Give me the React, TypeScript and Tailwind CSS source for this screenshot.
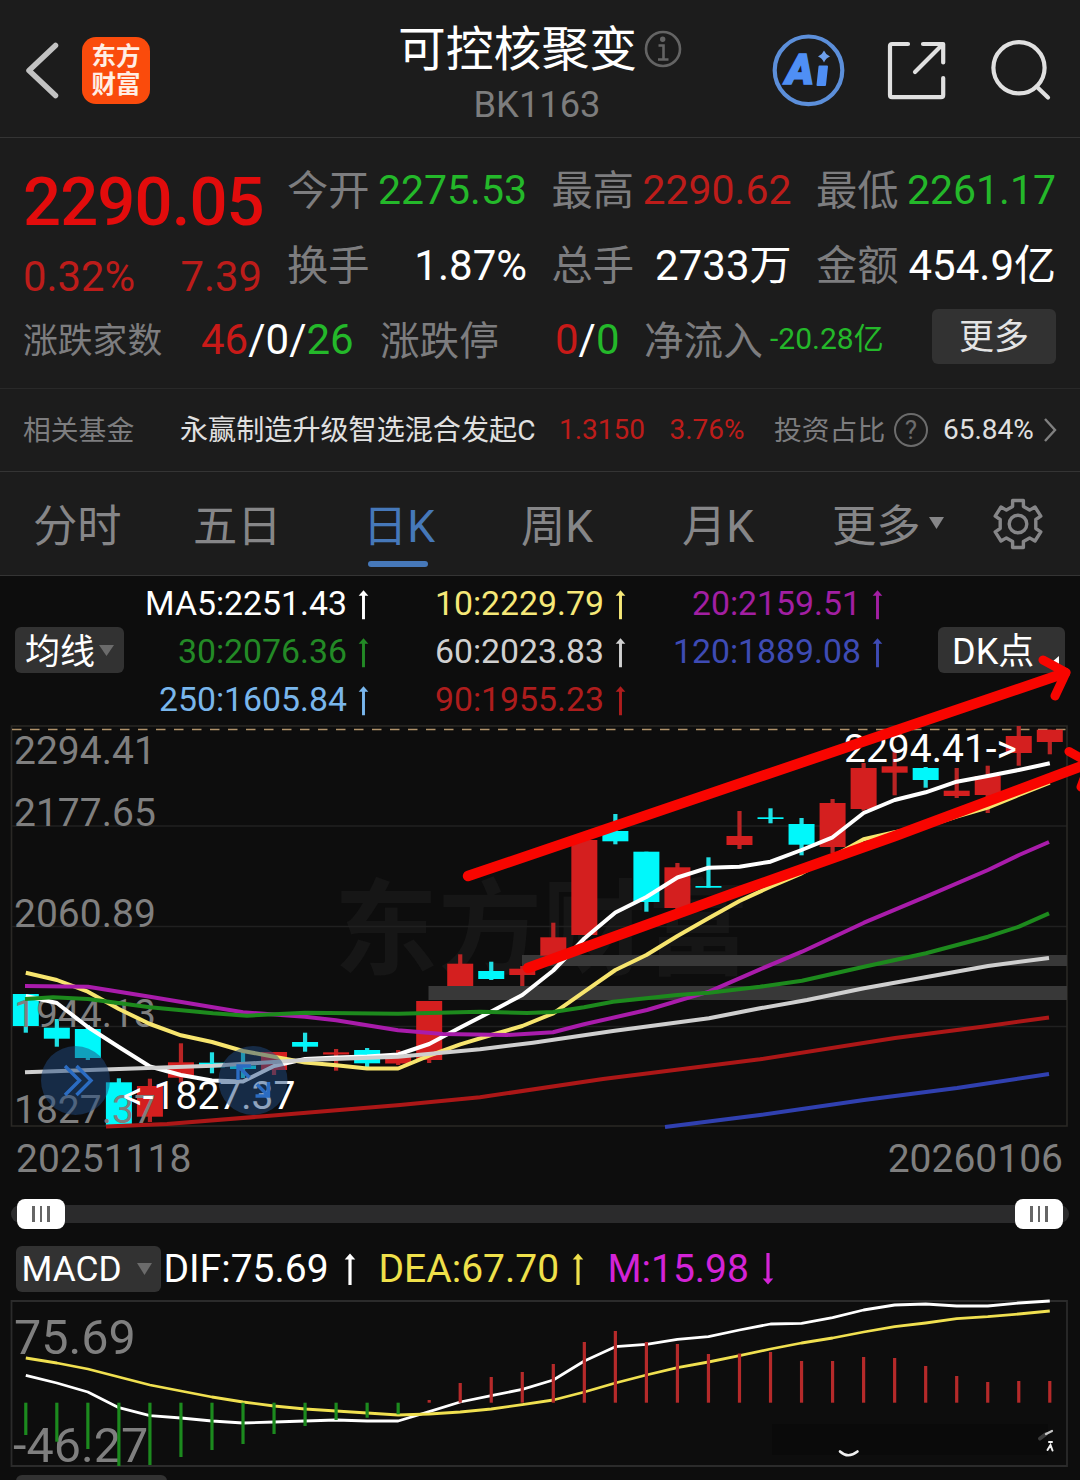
import React from 'react';
import clsx from 'clsx';

const FIRST_X = 25.8;
const STEP = 31.03;

const xAt = (index: number) => FIRST_X + index * STEP;

type Candle = [up: boolean, top: number, bottom: number, high: number, low: number];

const candles: Candle[] = [
  [false, 994, 1026, 994, 1032.7],
  [false, 1027.7, 1038.7, 1019, 1046.7],
  [false, 1029, 1058, 1025, 1060],
  [false, 1082.3, 1125.7, 1078.3, 1125.7],
  [true, 1086, 1116.7, 1078.7, 1122],
  [true, 1062.3, 1077.7, 1043.3, 1082.7],
  [false, 1062.7, 1067.3, 1052.3, 1073.3],
  [false, 1065.5, 1069, 1052, 1078],
  [true, 1052, 1070, 1052, 1075],
  [false, 1042, 1046.7, 1032.7, 1051.7],
  [true, 1052.3, 1054.5, 1049, 1070.7],
  [false, 1050, 1063.3, 1048, 1067.3],
  [true, 1055, 1063.5, 1050, 1065],
  [true, 1001, 1060, 1001, 1063],
  [true, 963.7, 986, 954.3, 986],
  [false, 971, 979, 961.7, 980],
  [true, 968.7, 975, 966, 986],
  [true, 937.3, 955.7, 922.7, 958],
  [true, 840, 935, 840, 935],
  [false, 831, 841.3, 814, 844.3],
  [false, 851.7, 902, 851.7, 911.7],
  [true, 867.3, 908, 863, 910.7],
  [false, 886, 887.7, 857.3, 887.7],
  [true, 836, 845, 811, 849],
  [false, 817.3, 819, 808.3, 823.3],
  [false, 824, 844.7, 818, 855.3],
  [true, 803, 847, 799, 853],
  [true, 768, 809, 763, 810.7],
  [true, 766.3, 772.7, 750, 795.3],
  [false, 768, 780, 767, 787.7],
  [true, 790.7, 796, 768, 798],
  [true, 776, 795, 765.7, 813],
  [true, 736, 753, 726, 765.7],
  [true, 729.7, 742, 729.7, 754.3],
];

const ma5 = [
  996, 1003, 1027, 1047, 1066.5, 1075, 1080.5, 1081.5, 1066, 1059, 1057.5, 1056.5, 1054.5, 1044, 1027.5, 1011.5, 995,
  970.5, 938.5, 912.5, 897, 877.5, 867.7, 866.7, 861.7, 850, 837.3, 813, 800, 792.3, 781.7, 776, 770, 763.3,
];

const ma10 = [
  972.7, 980, 991.7, 1009, 1024, 1035.3, 1042, 1051, 1056.7, 1062.5, 1065.3, 1068.5, 1068.5, 1055.6, 1044.3, 1035, 1026,
  1013.3, 991.7, 970, 955, 936, 918.3, 901, 886.7, 873.3, 856.7, 839.3, 832.3, 826.7, 816.7, 807.7, 795, 782.7,
];

const ma20 =
  '25,986 88,986.7 150,996.7 213,1007.3 243,1012.3 305,1016.7 336,1020.3 398,1030.3 443,1034 507,1035 553,1032.3 584,1024.3 647,1010 709,991.7 760,969.3 802,951.7 864,922.7 926,896.7 988,870 1019,855 1049,842';
const ma30 =
  '25,999 53,997.3 88,999 150,1007.3 213,1013.3 247,1015.7 305,1012.7 398,1013.7 480,1011.7 527,1013 553,1012 584,1007.3 613,1001.7 677,995 709,992.7 760,986.7 802,980.7 864,966.7 926,953.3 988,936.7 1019,926.7 1049,913.3';
const ma60 =
  '25,1072.3 213,1065.7 305,1060 398,1056.7 480,1049.3 533,1042.7 613,1031 709,1018.3 760,1008.3 807,1000 864,988.3 988,966 1049,958';
const ma90 = '106,1126.5 167,1124 267,1116 400,1105 480,1097.3 603,1079 760,1059.3 895,1038 988,1026 1049,1017.5';
const ma120 = '665,1127 760,1115 864,1100 957,1088 1049,1074';

const dif = [
  1375.3, 1383, 1392, 1407.7, 1415.7, 1418, 1421, 1423, 1422, 1421, 1420, 1421, 1421, 1411.7, 1402, 1395.7, 1389.3, 1380,
  1361, 1346.7, 1344.3, 1339.3, 1336.7, 1330, 1324, 1323.3, 1317.7, 1310, 1305, 1304, 1306, 1306, 1303, 1301,
];

const dea = [
  1358, 1363, 1369, 1377, 1385, 1391, 1397, 1402, 1406, 1409, 1411, 1413, 1415, 1414, 1412, 1409, 1404.7, 1400, 1392,
  1383, 1375, 1367.7, 1362, 1355.7, 1349, 1343, 1338, 1332, 1326.7, 1323, 1318.7, 1316.7, 1314, 1311,
];

// end of every histogram bar, the other end is on the zero line
const histogram = [
  1435, 1441.7, 1449, 1466, 1465, 1457, 1450, 1444, 1434, 1426, 1420, 1417.7, 1414.3, 1400, 1383, 1377, 1372, 1364, 1342,
  1331, 1342, 1344, 1354, 1353.5, 1352, 1361, 1361, 1357, 1358, 1366, 1376, 1382, 1381, 1381,
];
const ZERO_Y = 1402.7;

const toPoints = (values: number[]) => values.map((y, i) => `${xAt(i)},${y}`).join(' ');

interface TrendArrowProps {
  down?: boolean;
  className?: string;
}

function TrendArrow({ down, className }: TrendArrowProps) {
  return (
    <svg viewBox="0 0 12 32" className={clsx('shrink-0', down && 'rotate-180', className)}>
      <path d="M6 0.5 L11.3 6.5 H7.6 V32 H4.4 V6.5 H0.7 Z" fill="currentColor" />
    </svg>
  );
}

function Header() {
  return (
    <header className="flex h-[138px] items-start border-b border-[#343434] pl-[21px]">
      <svg viewBox="0 0 40 60" className="mt-[41px] h-[60px] w-10 fill-none stroke-[#c2c2c2]" strokeWidth="5.5">
        <path d="M34.5 4.5 L8 29.5 L34.5 54.5" strokeLinecap="round" strokeLinejoin="round" />
      </svg>
      <div className="mt-[37px] ml-[21px] flex h-[67px] w-[68px] flex-col items-center justify-center rounded-[14px] bg-[#fa4b0c] pt-px text-[24.5px] leading-[28px] font-bold text-[#ffeee4]">
        <span>东方</span>
        <span>财富</span>
      </div>
      <div className="ml-[248px] w-[286px]">
        <div className="mt-[19px] flex h-[60px] items-center gap-[7px]">
          <h1 className="pt-[2px] text-[47.8px] leading-[60px] text-white">可控核聚变</h1>
          <svg viewBox="0 0 38 38" className="size-[38px] fill-none stroke-[#646464]" strokeWidth="2.6">
            <circle cx="19" cy="19" r="17" />
            <path d="M14.5 15.5 H19.5 V29 M14 29.5 H24.5" />
            <circle cx="18.7" cy="9.2" r="1.4" fill="#646464" />
          </svg>
        </div>
        <div className="w-[278px] pt-px text-center text-[36.3px] leading-[50px] text-[#7d7d7d]">BK1163</div>
      </div>
      <div className="mt-[34px] ml-[88px] flex size-[73px] items-center justify-center">
        <svg viewBox="0 0 73 73" className="size-[73px]">
          <circle cx="36.5" cy="36.3" r="33.8" fill="none" stroke="#5c8fda" strokeWidth="4.2" />
          <text x="13.5" y="50" fontSize="43" fontWeight="900" fontStyle="italic" fill="#4f8ff5" stroke="#4f8ff5" strokeWidth="1.5">
            A
          </text>
          <path d="M47.5 32.5 H55 L53 51 H45.5 Z" fill="#4f8ff5" stroke="#4f8ff5" strokeWidth="2" strokeLinejoin="round" />
          <path d="M52 16.5 Q53.8 20.8 58 22.6 Q53.8 24.2 52 28.5 Q50.2 24.2 46 22.6 Q50.2 20.8 52 16.5 Z" fill="#6d9fec" />
        </svg>
      </div>
      <svg
        viewBox="0 0 62 62"
        className="mt-[39px] ml-[41px] size-[62px] fill-none stroke-[#e0e0e0]"
        strokeWidth="4.2"
        strokeLinecap="round"
        strokeLinejoin="round"
      >
        <path d="M22 5 H6 Q4 5 4 7 V56 Q4 58.2 6 58.2 H55 Q57.2 58.2 57.2 56 V39" />
        <path d="M37 5 H57.2 V23.5 M56 6 L29 33" />
      </svg>
      <svg
        viewBox="0 0 66 66"
        className="mt-[37px] ml-[40px] size-[66px] fill-none stroke-[#e0e0e0]"
        strokeWidth="4.2"
        strokeLinecap="round"
      >
        <circle cx="31" cy="30.8" r="25.6" />
        <path d="M48.5 49.5 L60 60.5" />
      </svg>
    </header>
  );
}

interface QuoteCellProps {
  label: string;
  value: string;
  color: string;
}

function QuoteCell({ label, value, color }: QuoteCellProps) {
  return (
    <div className="flex w-[240px] items-center justify-between">
      <span className="pt-[3px] text-[41.3px] text-[#7d7d7f]">{label}</span>
      <span className={clsx('pt-px', color)}>{value}</span>
    </div>
  );
}

function QuotePanel() {
  return (
    <section className="h-[251px] border-b border-[#292929] pt-[13px] pl-[23px] whitespace-nowrap">
      <div className="flex h-[150px]">
        <div className="w-[239px]">
          <div className="mt-[15px] h-[72px] text-[67px] leading-[72px] font-medium tracking-[-0.9px] text-[#e20c0c]">
            2290.05
          </div>
          <div className="mt-[12px] flex justify-between text-[41.8px] leading-[54px] text-[#bd1c1a]">
            <span>0.32%</span>
            <span>7.39</span>
          </div>
        </div>
        <div className="ml-[25px] flex flex-col pt-px leading-[75px]">
          <div className="flex h-[75px] items-center gap-[24.5px] text-[41px]">
            <QuoteCell label="今开" value="2275.53" color="text-[#24b82a]" />
            <QuoteCell label="最高" value="2290.62" color="text-[#bd1c1a]" />
            <QuoteCell label="最低" value="2261.17" color="text-[#24b82a]" />
          </div>
          <div className="flex h-[75px] items-center gap-[24.5px] text-[42px]">
            <QuoteCell label="换手" value="1.87%" color="text-white" />
            <QuoteCell label="总手" value="2733万" color="text-white" />
            <QuoteCell label="金额" value="454.9亿" color="text-white" />
          </div>
        </div>
      </div>
      <div className="flex h-[75px] items-center leading-[60px]">
        <span className="w-[178px] pt-[4px] text-[34.8px] text-[#7d7d7f]">涨跌家数</span>
        <span className="w-[179px] pt-[2px] text-[42px] text-white">
          <span className="text-[#c81a18]">46</span>/0/<span className="text-[#24b82a]">26</span>
        </span>
        <span className="w-[175px] pt-[6px] text-[39.6px] text-[#7d7d7f]">涨跌停</span>
        <span className="w-[89px] pt-[2px] text-[42px] text-white">
          <span className="text-[#c81a18]">0</span>/<span className="text-[#24b82a]">0</span>
        </span>
        <span className="w-[126px] pt-[6px] text-[39.6px] text-[#7d7d7f]">净流入</span>
        <span className="text-[30px] text-[#24b82a]">-20.28亿</span>
        <button className="mr-6 mb-1 ml-auto h-[55px] w-[124px] rounded-md bg-[#323232] pt-[3px] text-[35px] leading-[52px] text-[#e4e4e4]">
          更多
        </button>
      </div>
    </section>
  );
}

function FundRow() {
  return (
    <section className="flex h-[83px] items-center border-b border-[#343434] pl-[23px] text-[28px] whitespace-nowrap">
      <span className="w-[157px] pt-[2px] text-[27.8px] text-[#7d7d7f]">相关基金</span>
      <span className="w-[379px] pt-[2px] text-[28.1px] text-[#e0e0e0]">永赢制造升级智选混合发起C</span>
      <span className="w-[110.5px] text-[#bd1c1a]">1.3150</span>
      <span className="w-[104.5px] text-[#bd1c1a]">3.76%</span>
      <span className="w-[120px] pt-[2px] text-[27.8px] text-[#7d7d7f]">投资占比</span>
      <span className="flex size-[34px] items-center justify-center rounded-full border-[2.5px] border-[#6c6c6c] text-[26px] leading-none text-[#6c6c6c]">
        ?
      </span>
      <span className="ml-[15px] text-[#e0e0e0]">65.84%</span>
      <svg viewBox="0 0 14 26" className="ml-[9px] h-[26px] w-[14px] fill-none stroke-[#808080]" strokeWidth="2.4">
        <path d="M2 2 L12 13 L2 24" />
      </svg>
    </section>
  );
}

const tabs = [
  { name: '分时', width: 'w-[160px]' },
  { name: '五日', width: 'w-[170px]' },
  { name: '日K', width: 'w-[158px]' },
  { name: '周K', width: 'w-[161px]' },
  { name: '月K', width: 'w-[150px]' },
];

const gearTeeth =
  'M20.6 2.5 H31.4 V8.6 L37.6 12.1 L43 9 L48.8 18.2 L43.8 21.5 V30.5 L48.8 33.8 L43 43 L37.6 39.9 L31.4 43.4 V49.5 H20.6 V43.4 L14.4 39.9 L9 43 L3.2 33.8 L8.2 30.5 V21.5 L3.2 18.2 L9 9 L14.4 12.1 L20.6 8.6 Z';

function PeriodTabs() {
  return (
    <nav className="flex h-[104px] items-center border-b border-[#343434] pl-[33px] text-[44.3px] leading-[111px] text-[#868688]">
      {tabs.map(({ name, width }) => (
        <div key={name} className={clsx('relative h-full', width, name === '日K' && 'text-[#4678b9]')}>
          {name}
          {name === '日K' && <i className="absolute bottom-[8px] left-[5px] h-[6px] w-[60px] rounded-full bg-[#4678b9]" />}
        </div>
      ))}
      <div className="flex h-full items-start gap-[8px]">
        更多
        <svg viewBox="0 0 15 12" className="mt-[45px] h-3 w-[15px] fill-[#868688]">
          <path d="M0 0 H15 L7.5 12 Z" />
        </svg>
      </div>
      <svg viewBox="0 0 52 52" className="ml-12 size-[52px] fill-none stroke-[#868688]" strokeWidth="3.4">
        <path d={gearTeeth} strokeLinejoin="round" />
        <circle cx="26" cy="26" r="8.8" />
      </svg>
    </nav>
  );
}

interface LegendItem {
  text: string;
  color: string;
}

const legend: LegendItem[][] = [
  [
    { text: 'MA5:2251.43', color: 'text-white' },
    { text: '30:2076.36', color: 'text-[#238a26]' },
    { text: '250:1605.84', color: 'text-[#79b6ec]' },
  ],
  [
    { text: '10:2229.79', color: 'text-[#f6e878]' },
    { text: '60:2023.83', color: 'text-[#d0d0d0]' },
    { text: '90:1955.23', color: 'text-[#ae1d1d]' },
  ],
  [
    { text: '20:2159.51', color: 'text-[#a21fa2]' },
    { text: '120:1889.08', color: 'text-[#3e4bb4]' },
  ],
];

function MovingAverages() {
  return (
    <div className="flex h-[144px] items-start pt-[4px] pl-[15px] whitespace-nowrap">
      <button className="mt-[47px] flex h-[46px] w-[109px] items-center gap-1 rounded-md bg-[#323232] pl-[10px] text-[35px] leading-[46px] text-white">
        <span className="pt-[5px]">均线</span>
        <svg viewBox="0 0 15 11" className="h-[11px] w-[15px] fill-[#6b6b6b]">
          <path d="M0 0 H15 L7.5 11 Z" />
        </svg>
      </button>
      {legend.map((column, i) => (
        <div key={i} className={clsx('flex flex-col', i === 0 ? 'w-[245px]' : i === 1 ? 'w-[257px]' : 'w-[257px]')}>
          {column.map(({ text, color }) => (
            <div key={text} className={clsx('flex h-12 items-center justify-end gap-[11px] text-[33.8px]', color)}>
              {text}
              <TrendArrow className="h-[31px] w-[11px]" />
            </div>
          ))}
        </div>
      ))}
      <button className="relative mt-[47px] ml-[55px] h-[46px] w-[127px] rounded-md bg-[#323232] pt-[3px] pl-[14px] text-left text-[36px] leading-[44px] text-white">
        DK点
        <svg viewBox="0 0 8 12" className="absolute right-[6px] bottom-[5px] h-3 w-2 fill-white">
          <path d="M8 0 V12 L1 6 Z" />
        </svg>
      </button>
    </div>
  );
}

function KLineChart() {
  return (
    <svg viewBox="0 720 1080 410" className="block h-[410px] w-[1080px] text-[39px]">
      <text x="334" y="967" fontSize="104" fontWeight="700" fill="#161616">
        东方财富
      </text>
      <g stroke="#202020" strokeWidth="1.3">
        <path d="M11 826 H1067 M11 926.5 H1067 M11 1026.5 H1067" />
        <path d="M11.5 726 H1067 V1126 H11.5 Z" fill="none" stroke="#2a2825" strokeWidth="1.6" />
      </g>
      <path d="M12 729.5 H1067" stroke="#b0926a" strokeWidth="1.4" strokeDasharray="9.5 8.5" />
      <rect x="522" y="955" width="545" height="11" fill="#383838" />
      <rect x="428.5" y="986" width="638.5" height="14" fill="#383838" />

      {candles.map(([up, top, bottom, high, low], i) => (
        <g key={i} fill={up ? '#d41f1f' : '#00f8fb'}>
          <rect x={xAt(i) - 2.1} y={high} width="4.2" height={low - high} fill={up ? '#b82424' : '#1fdfe4'} />
          <rect x={xAt(i) - 13} y={top} width="26" height={bottom - top} />
        </g>
      ))}

      <g fill="#7f7f7f">
        <text x="14" y="764">2294.41</text>
        <text x="14" y="826">2177.65</text>
        <text x="14" y="927">2060.89</text>
        <text x="14" y="1027">1944.13</text>
        <text x="14" y="1123">1827.37</text>
      </g>

      <g fill="none" strokeWidth="4" strokeLinejoin="round">
        <polyline points={toPoints(ma5)} stroke="#ffffff" />
        <polyline points={toPoints(ma10)} stroke="#f7e56e" />
        <polyline points={ma20} stroke="#a91cab" />
        <polyline points={ma30} stroke="#1d8a1d" />
        <polyline points={ma60} stroke="#cfcfcf" />
        <polyline points={ma90} stroke="#ac1717" />
        <polyline points={ma120} stroke="#3040b0" />
      </g>

      <g fill="#ffffff">
        <text x="844" y="762">{'2294.41->'}</text>
        <text x="123" y="1108.5">{'<-1827.37'}</text>
      </g>

      <g fill="#1f4a80" fillOpacity="0.5">
        <circle cx="75.5" cy="1080.5" r="34.5" />
        <circle cx="253" cy="1080.5" r="34.5" />
      </g>
      <g fill="none" stroke="#2b6cc2" strokeWidth="3.4">
        <path d="M65 1066 L79.5 1080.5 L65 1095 M76.5 1066 L91 1080.5 L76.5 1095" />
        <path d="M238 1080 V1066 H251 M238.5 1066.5 L249.5 1077.5" />
        <path d="M268.5 1082 V1096 H255.5 M268 1095.5 L257 1084.5" />
      </g>
    </svg>
  );
}

// hand drawn channel over the price chart
function TrendChannel() {
  return (
    <svg
      viewBox="0 576 1080 554"
      className="pointer-events-none absolute top-0 left-0 h-[554px] w-[1080px] fill-none stroke-[#f80500]"
      strokeLinecap="round"
      strokeLinejoin="round"
    >
      <path d="M468 876 L1065 673 M528 968 L740 891 L895 836 L1090 763" strokeWidth="10.4" />
      <path d="M1043 660 L1066 672.5 L1055 696 M1069 751.5 L1090 763 L1081 787" strokeWidth="9" />
    </svg>
  );
}

function SliderHandle() {
  return (
    <div className="flex h-[30px] w-12 items-center justify-center gap-[5px] rounded-lg bg-white">
      <i className="h-4 w-[2.5px] bg-[#666]" />
      <i className="h-4 w-[2.5px] bg-[#666]" />
      <i className="h-4 w-[2.5px] bg-[#666]" />
    </div>
  );
}

function RangeBar() {
  return (
    <div className="h-[114px]">
      <div className="flex justify-between pt-1 pr-[17px] pl-4 text-[39px] leading-[50px] text-[#7f7f7f]">
        <span>20251118</span>
        <span>20260106</span>
      </div>
      <div className="mx-[11px] mt-[21px] flex h-[18px] items-center justify-between rounded-full bg-[#2b2b2c] px-[6px]">
        <SliderHandle />
        <SliderHandle />
      </div>
    </div>
  );
}

function MacdLegend() {
  return (
    <div className="flex h-[54px] items-start pt-[2px] pl-[15.5px] text-[39px] leading-[46px] whitespace-nowrap">
      <button className="flex h-[46px] w-[145px] items-center justify-between rounded-md bg-[#323232] pr-[9px] pl-[6px] text-[35.3px] text-white">
        MACD
        <svg viewBox="0 0 15 12" className="h-3 w-[15px] fill-[#6b6b6b]">
          <path d="M0 0 H15 L7.5 12 Z" />
        </svg>
      </button>
      <span className="flex w-[218px] items-center gap-[15px] pl-[3px] text-white">
        DIF:75.69
        <TrendArrow className="h-[34px] w-[12px]" />
      </span>
      <span className="flex w-[229px] items-center gap-[13px] text-[#efe04a]">
        DEA:67.70
        <TrendArrow className="h-[34px] w-[12px]" />
      </span>
      <span className="flex items-center gap-[13px] text-[#d323d6]">
        M:15.98
        <TrendArrow down className="h-[34px] w-[12px]" />
      </span>
    </div>
  );
}

function MacdChart() {
  return (
    <svg viewBox="0 1298 1080 172" className="block h-[172px] w-[1080px] text-[48.5px]">
      <path d="M11.5 1301 H1067 V1466 H11.5 Z" fill="none" stroke="#2b2b2b" strokeWidth="1.8" />
      <g fill="#7f7f7f">
        <text x="14" y="1354">75.69</text>
        <text x="13" y="1462">-46.27</text>
      </g>
      <g fill="none" strokeWidth="2.8" strokeLinejoin="round">
        <polyline points={toPoints(dif)} stroke="#ffffff" />
        <polyline points={toPoints(dea)} stroke="#f0e050" />
      </g>
      {histogram.map((y, i) => (
        <rect
          key={i}
          x={xAt(i) - 1.6}
          y={Math.min(y, ZERO_Y)}
          width="3.2"
          height={Math.abs(y - ZERO_Y)}
          fill={y > ZERO_Y ? '#1c8a1e' : '#b52a2a'}
        />
      ))}
      <rect x="772" y="1424" width="276" height="31" fill="#0a0a0a" />
      <g fill="none" stroke="#f0f0f0" strokeLinecap="round">
        <path d="M840 1451.5 Q848 1459 857.5 1451.5" strokeWidth="2.6" />
        <path d="M1040 1438.5 L1046 1434" strokeWidth="4" stroke="#3c3c3c" />
        <path d="M1046 1434 L1052 1431" strokeWidth="2.2" stroke="#c4c4c4" />
        <path d="M1049 1442 H1052 M1047.5 1450 L1050.5 1445 L1052.5 1450.5" strokeWidth="2" />
      </g>
    </svg>
  );
}

export default function App() {
  return (
    <div className="h-[1480px] w-[1080px] overflow-hidden bg-[#0d0d0d] font-['Roboto','Noto_Sans_CJK_SC',sans-serif]">
      <div className="bg-[#1c1c1c]">
        <Header />
        <QuotePanel />
        <FundRow />
        <PeriodTabs />
      </div>
      <main className="relative">
        <MovingAverages />
        <KLineChart />
        <TrendChannel />
        <RangeBar />
        <MacdLegend />
        <MacdChart />
        <div className="mt-[5px] ml-[15.5px] h-[46px] w-[151px] rounded-md bg-[#323232]" />
      </main>
    </div>
  );
}
